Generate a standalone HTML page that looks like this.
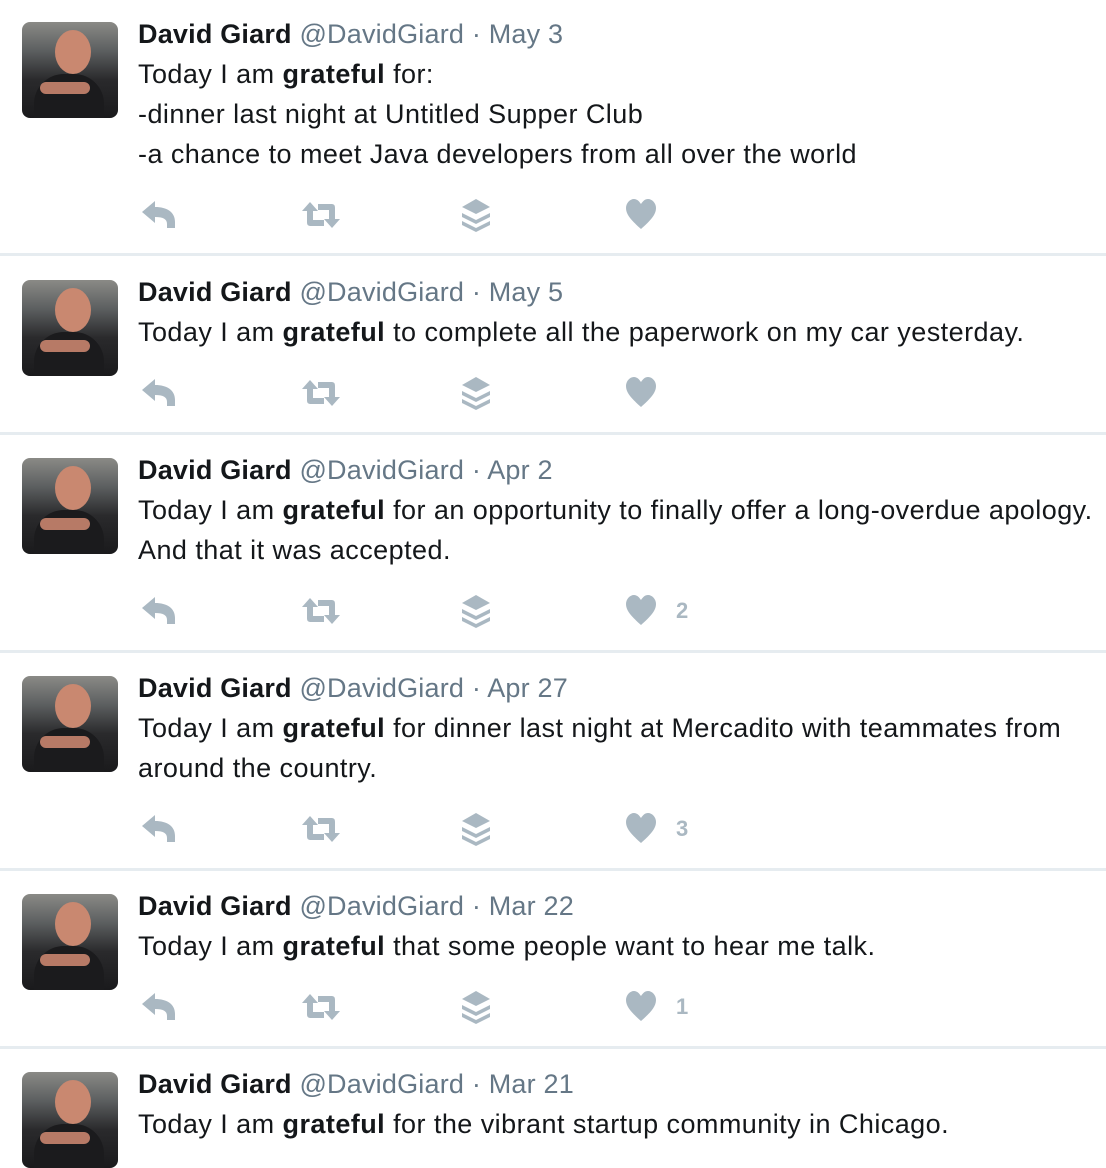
<!DOCTYPE html>
<html><head><meta charset="utf-8"><style>
body{margin:0;width:1106px;height:1162px;background:#fff;position:relative;overflow:hidden;font-family:"Liberation Sans",Arial,sans-serif;color:#14171a}
.l{position:absolute;left:138px;height:40px;line-height:40px;font-size:27px;letter-spacing:0.45px;white-space:nowrap}
.n{letter-spacing:0.2px}
.n b{font-weight:bold}.n span{color:#657786}
.sep{position:absolute;left:0;width:1106px;height:3px;background:#e6ecf0}
.av{position:absolute;left:22px;width:96px;height:96px;border-radius:8px;overflow:hidden;background:linear-gradient(180deg,#8a8a86 0%,#5c5f60 30%,#2a2a2c 60%,#1a1a1c 100%)}
.av .f{position:absolute;left:33px;top:8px;width:36px;height:44px;border-radius:50%;background:#c98870}
.av .h{position:absolute;left:12px;top:52px;width:70px;height:44px;border-radius:30px 30px 0 0;background:#1b1b1d}
.av .a{position:absolute;left:18px;top:60px;width:50px;height:12px;border-radius:6px;background:#b77a66}
.ic{position:absolute;fill:#aab8c2}
.cnt{position:absolute;left:676px;font-size:22px;font-weight:bold;color:#aab8c2;line-height:30px}
</style></head><body>
<svg width="0" height="0" style="position:absolute"><defs>
<g id="rp"><path d="M0 12 L13 1 V7 C25 7 33 12 33 22 V28 H25 V24 C25 19 21 17 13 17 V23 Z"/></g>
<g id="rt"><path d="M8 2 L16 11 H11 V20 H22 V26 H9 C6 26 5 25 5 22 V11 H0 Z"/><path d="M30 28 L22 19 H27 V10 H16 V4 H29 C32 4 33 5 33 8 V19 H38 Z"/></g>
<g id="ly"><path d="M14 0 L28 8 L14 15 L0 8 Z"/><path d="M0 14 L14 21 L28 14 L28 18 L14 25 L0 18 Z"/><path d="M0 22 L14 29 L28 22 L28 26 L14 33 L0 26 Z"/></g>
<g id="ht"><path d="M15 30 C6 22 0 16 0 9 C0 4 4 0 8 0 C11 0 13 2 15 5 C17 2 19 0 22 0 C26 0 30 4 30 9 C30 16 24 22 15 30 Z"/></g>
</defs></svg>

<div class="av" style="top:22px"><div class="f"></div><div class="h"></div><div class="a"></div></div>
<div class="l n" style="top:14px"><b>David Giard</b> <span>@DavidGiard · May 3</span></div>
<div class="l" style="top:54px">Today I am <b>grateful</b> for:</div>
<div class="l" style="top:94px">-dinner last night at Untitled Supper Club</div>
<div class="l" style="top:134px">-a chance to meet Java developers from all over the world</div>
<svg class="ic" style="left:142px;top:200px" width="36" height="30"><use href="#rp"/></svg>
<svg class="ic" style="left:302px;top:200px" width="40" height="30"><use href="#rt"/></svg>
<svg class="ic" style="left:462px;top:199px" width="30" height="34"><use href="#ly"/></svg>
<svg class="ic" style="left:626px;top:199px" width="32" height="32"><use href="#ht"/></svg>
<div class="sep" style="top:253px"></div>

<div class="av" style="top:280px"><div class="f"></div><div class="h"></div><div class="a"></div></div>
<div class="l n" style="top:272px"><b>David Giard</b> <span>@DavidGiard · May 5</span></div>
<div class="l" style="top:312px">Today I am <b>grateful</b> to complete all the paperwork on my car yesterday.</div>
<svg class="ic" style="left:142px;top:378px" width="36" height="30"><use href="#rp"/></svg>
<svg class="ic" style="left:302px;top:378px" width="40" height="30"><use href="#rt"/></svg>
<svg class="ic" style="left:462px;top:377px" width="30" height="34"><use href="#ly"/></svg>
<svg class="ic" style="left:626px;top:377px" width="32" height="32"><use href="#ht"/></svg>
<div class="sep" style="top:432px"></div>

<div class="av" style="top:458px"><div class="f"></div><div class="h"></div><div class="a"></div></div>
<div class="l n" style="top:450px"><b>David Giard</b> <span>@DavidGiard · Apr 2</span></div>
<div class="l" style="top:490px">Today I am <b>grateful</b> for an opportunity to finally offer a long-overdue apology.</div>
<div class="l" style="top:530px">And that it was accepted.</div>
<svg class="ic" style="left:142px;top:596px" width="36" height="30"><use href="#rp"/></svg>
<svg class="ic" style="left:302px;top:596px" width="40" height="30"><use href="#rt"/></svg>
<svg class="ic" style="left:462px;top:595px" width="30" height="34"><use href="#ly"/></svg>
<svg class="ic" style="left:626px;top:595px" width="32" height="32"><use href="#ht"/></svg>
<div class="cnt" style="top:596px">2</div>
<div class="sep" style="top:650px"></div>

<div class="av" style="top:676px"><div class="f"></div><div class="h"></div><div class="a"></div></div>
<div class="l n" style="top:668px"><b>David Giard</b> <span>@DavidGiard · Apr 27</span></div>
<div class="l" style="top:708px">Today I am <b>grateful</b> for dinner last night at Mercadito with teammates from</div>
<div class="l" style="top:748px">around the country.</div>
<svg class="ic" style="left:142px;top:814px" width="36" height="30"><use href="#rp"/></svg>
<svg class="ic" style="left:302px;top:814px" width="40" height="30"><use href="#rt"/></svg>
<svg class="ic" style="left:462px;top:813px" width="30" height="34"><use href="#ly"/></svg>
<svg class="ic" style="left:626px;top:813px" width="32" height="32"><use href="#ht"/></svg>
<div class="cnt" style="top:814px">3</div>
<div class="sep" style="top:868px"></div>

<div class="av" style="top:894px"><div class="f"></div><div class="h"></div><div class="a"></div></div>
<div class="l n" style="top:886px"><b>David Giard</b> <span>@DavidGiard · Mar 22</span></div>
<div class="l" style="top:926px">Today I am <b>grateful</b> that some people want to hear me talk.</div>
<svg class="ic" style="left:142px;top:992px" width="36" height="30"><use href="#rp"/></svg>
<svg class="ic" style="left:302px;top:992px" width="40" height="30"><use href="#rt"/></svg>
<svg class="ic" style="left:462px;top:991px" width="30" height="34"><use href="#ly"/></svg>
<svg class="ic" style="left:626px;top:991px" width="32" height="32"><use href="#ht"/></svg>
<div class="cnt" style="top:992px">1</div>
<div class="sep" style="top:1046px"></div>

<div class="av" style="top:1072px"><div class="f"></div><div class="h"></div><div class="a"></div></div>
<div class="l n" style="top:1064px"><b>David Giard</b> <span>@DavidGiard · Mar 21</span></div>
<div class="l" style="top:1104px">Today I am <b>grateful</b> for the vibrant startup community in Chicago.</div>
</body></html>
